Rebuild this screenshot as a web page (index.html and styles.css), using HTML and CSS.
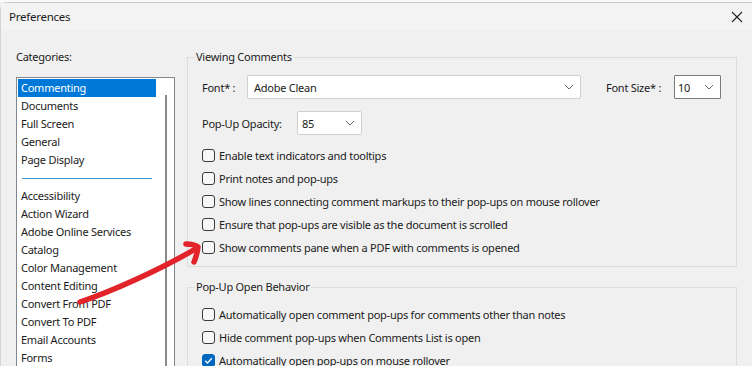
FILE: index.html
```html
<!DOCTYPE html>
<html>
<head>
	<meta charset="utf-8">
	<title>Preferences</title>
	<link rel="stylesheet" href="styles.css">
</head>
<body>
<div class="backdrop"></div>
<div class="dialog">
	<div class="titlebar">
		<span class="title">Preferences</span>
		<svg class="close" width="12" height="12" viewBox="0 0 12 12">
			<path d="M1 1 L11 11 M11 1 L1 11" stroke="#222" stroke-width="1.1" fill="none"/>
		</svg>
	</div>
	<div class="content">
		<div class="sidebar">
			<div class="cat-label">Categories:</div>
			<div class="listbox">
				<ul class="cat-list">
					<li class="selected">Commenting</li>
					<li>Documents</li>
					<li>Full Screen</li>
					<li>General</li>
					<li>Page Display</li>
					<li class="sep"><span></span></li>
					<li>Accessibility</li>
					<li>Action Wizard</li>
					<li>Adobe Online Services</li>
					<li>Catalog</li>
					<li>Color Management</li>
					<li>Content Editing</li>
					<li>Convert From PDF</li>
					<li>Convert To PDF</li>
					<li>Email Accounts</li>
					<li>Forms</li>
				</ul>
				<div class="scrollbar"><div class="thumb"></div></div>
			</div>
		</div>

		<div class="panel">
			<fieldset class="group">
				<legend>Viewing Comments</legend>
				<div class="group-body">
					<div class="field-row first">
						<span class="lbl lbl-font">Font* :</span>
						<div class="select sel-font">
							<span>Adobe Clean</span>
							<svg width="10" height="6" viewBox="0 0 10 6"><path d="M1 1 L5 5 L9 1" stroke="#666" fill="none"/></svg>
						</div>
						<span class="lbl lbl-size">Font Size* :</span>
						<div class="select sel-size dark">
							<span>10</span>
							<svg width="10" height="6" viewBox="0 0 10 6"><path d="M1 1 L5 5 L9 1" stroke="#666" fill="none"/></svg>
						</div>
					</div>
					<div class="field-row">
						<span class="lbl lbl-opacity">Pop-Up Opacity:</span>
						<div class="select sel-opacity">
							<span>85</span>
							<svg width="10" height="6" viewBox="0 0 10 6"><path d="M1 1 L5 5 L9 1" stroke="#666" fill="none"/></svg>
						</div>
					</div>
					<div class="checks">
						<label class="check"><span class="box"></span>Enable text indicators and tooltips</label>
						<label class="check"><span class="box"></span>Print notes and pop-ups</label>
						<label class="check"><span class="box"></span>Show lines connecting comment markups to their pop-ups on mouse rollover</label>
						<label class="check"><span class="box"></span>Ensure that pop-ups are visible as the document is scrolled</label>
						<label class="check"><span class="box"></span>Show comments pane when a PDF with comments is opened</label>
					</div>
				</div>
			</fieldset>

			<fieldset class="group second">
				<legend>Pop-Up Open Behavior</legend>
				<div class="group-body">
					<div class="checks">
						<label class="check"><span class="box"></span>Automatically open comment pop-ups for comments other than notes</label>
						<label class="check"><span class="box"></span>Hide comment pop-ups when Comments List is open</label>
						<label class="check"><span class="box checked">
							<svg width="13" height="13" viewBox="0 0 13 13"><path d="M3.2 6.8 L5.5 9 L9.8 4.2" stroke="#fff" stroke-width="1.3" fill="none"/></svg>
						</span>Automatically open pop-ups on mouse rollover</label>
					</div>
				</div>
			</fieldset>
		</div>
	</div>

	<svg class="arrow" width="752" height="366" viewBox="0 0 752 366">
		<path d="M80 302 C 110 292, 160 270, 197 248" stroke="#e2242a" stroke-width="5.5" fill="none" stroke-linecap="round"/>
		<path d="M186 244 Q 194 244, 198 247 Q 197 255, 194 262" stroke="#e2242a" stroke-width="5.5" fill="none" stroke-linecap="round" stroke-linejoin="round"/>
	</svg>
</div>
</body>
</html>
```

FILE: styles.css
```css
html, body{
	margin: 0;
	height: 100%;
	overflow: hidden;
}
body{
	background: #f0f0f0;
	font-family: "Noto Sans", "Open Sans", sans-serif;
	font-size: 11px;
	letter-spacing: -0.25px;
	color: #1b1b1b;
}
.backdrop{
	height: 2px;
	background: #fafafa;
}
.dialog{
	position: relative;
	height: 364px;
	border-top: 1px solid #c9c9c9;
	border-left: 1px solid #d4d4d4;
	border-top-left-radius: 7px;
	background: #f0f0f0;
}
.titlebar{
	height: 27px;
	display: flex;
	align-items: center;
	justify-content: space-between;
	padding: 0 9px 0 8px;
	background: #f3f3f3;
}
.titlebar .title{
	font-size: 11.5px;
}

.content{
	display: flex;
	padding-left: 15px;
}
.sidebar{
	width: 159px;
}
.cat-label{
	margin-top: 19px;
	line-height: 16px;
}
.listbox{
	margin-top: 12px;
	height: 300px;
	border: 1px solid #828790;
	border-bottom: none;
	background: #fff;
	display: flex;
}
.cat-list{
	list-style: none;
	margin: 0;
	padding: 1px 0 0 1px;
	width: 138px;
}
.cat-list li{
	height: 18px;
	line-height: 18px;
	padding-left: 3px;
	white-space: nowrap;
}
.cat-list li.selected{
	background: #0078d7;
	color: #fff;
}
.cat-list li.sep{
	display: flex;
	align-items: center;
	padding-left: 4px;
}
.cat-list li.sep span{
	display: block;
	width: 130px;
	height: 1px;
	background: #3d8fc9;
}
.scrollbar{
	flex: 1;
	display: flex;
	justify-content: center;
}
.scrollbar .thumb{
	width: 2px;
	margin-top: 17px;
	margin-left: 1px;
	background: #8a8a8a;
}

.panel{
	width: 550px;
	margin-left: 12px;
}
.group{
	margin: 19px 0 0 0;
	padding: 0 0 7px 0;
	border: 1px solid #dcdcdc;
	min-width: 0;
}
.group.second{
	margin-top: 12px;
}
.group legend{
	margin-left: 6px;
	padding: 0 2px;
	line-height: 16px;
}
.group-body{
	padding-left: 14px;
}
.field-row{
	display: flex;
	align-items: center;
	height: 24px;
	margin-top: 12px;
}
.field-row.first{
	margin-top: 10px;
}
.lbl-font{
	width: 45px;
}
.lbl-size{
	margin-left: 25px;
	width: 68px;
}
.lbl-opacity{
	width: 95px;
}
.select{
	height: 22px;
	border: 1px solid #cfcfcf;
	border-radius: 2px;
	background: #fff;
	display: flex;
	align-items: center;
	justify-content: space-between;
	padding: 0 6px 0 6px;
	box-sizing: content-box;
}
.select.dark{
	border-color: #7a7a7a;
	border-radius: 1px;
}
.sel-font{
	width: 320px;
}
.sel-size{
	width: 36px;
	padding-left: 3px;
}
.sel-opacity{
	width: 53px;
	padding-left: 4px;
}

.checks{
	margin-top: 9px;
}
.second .checks{
	margin-top: 8px;
}
.check{
	display: flex;
	align-items: center;
	height: 23px;
	white-space: nowrap;
}
.check .box{
	width: 11px;
	height: 11px;
	border: 1px solid #3a3a3a;
	border-radius: 3px;
	margin-right: 4px;
	background: #f7f7f7;
	position: relative;
}
.check .box.checked{
	background: #0067c0;
	border-color: #0067c0;
}
.check .box.checked svg{
	position: absolute;
	left: -1px;
	top: -1px;
}

.arrow{
	position: absolute;
	left: -1px;
	top: -3px;
	pointer-events: none;
}
```
